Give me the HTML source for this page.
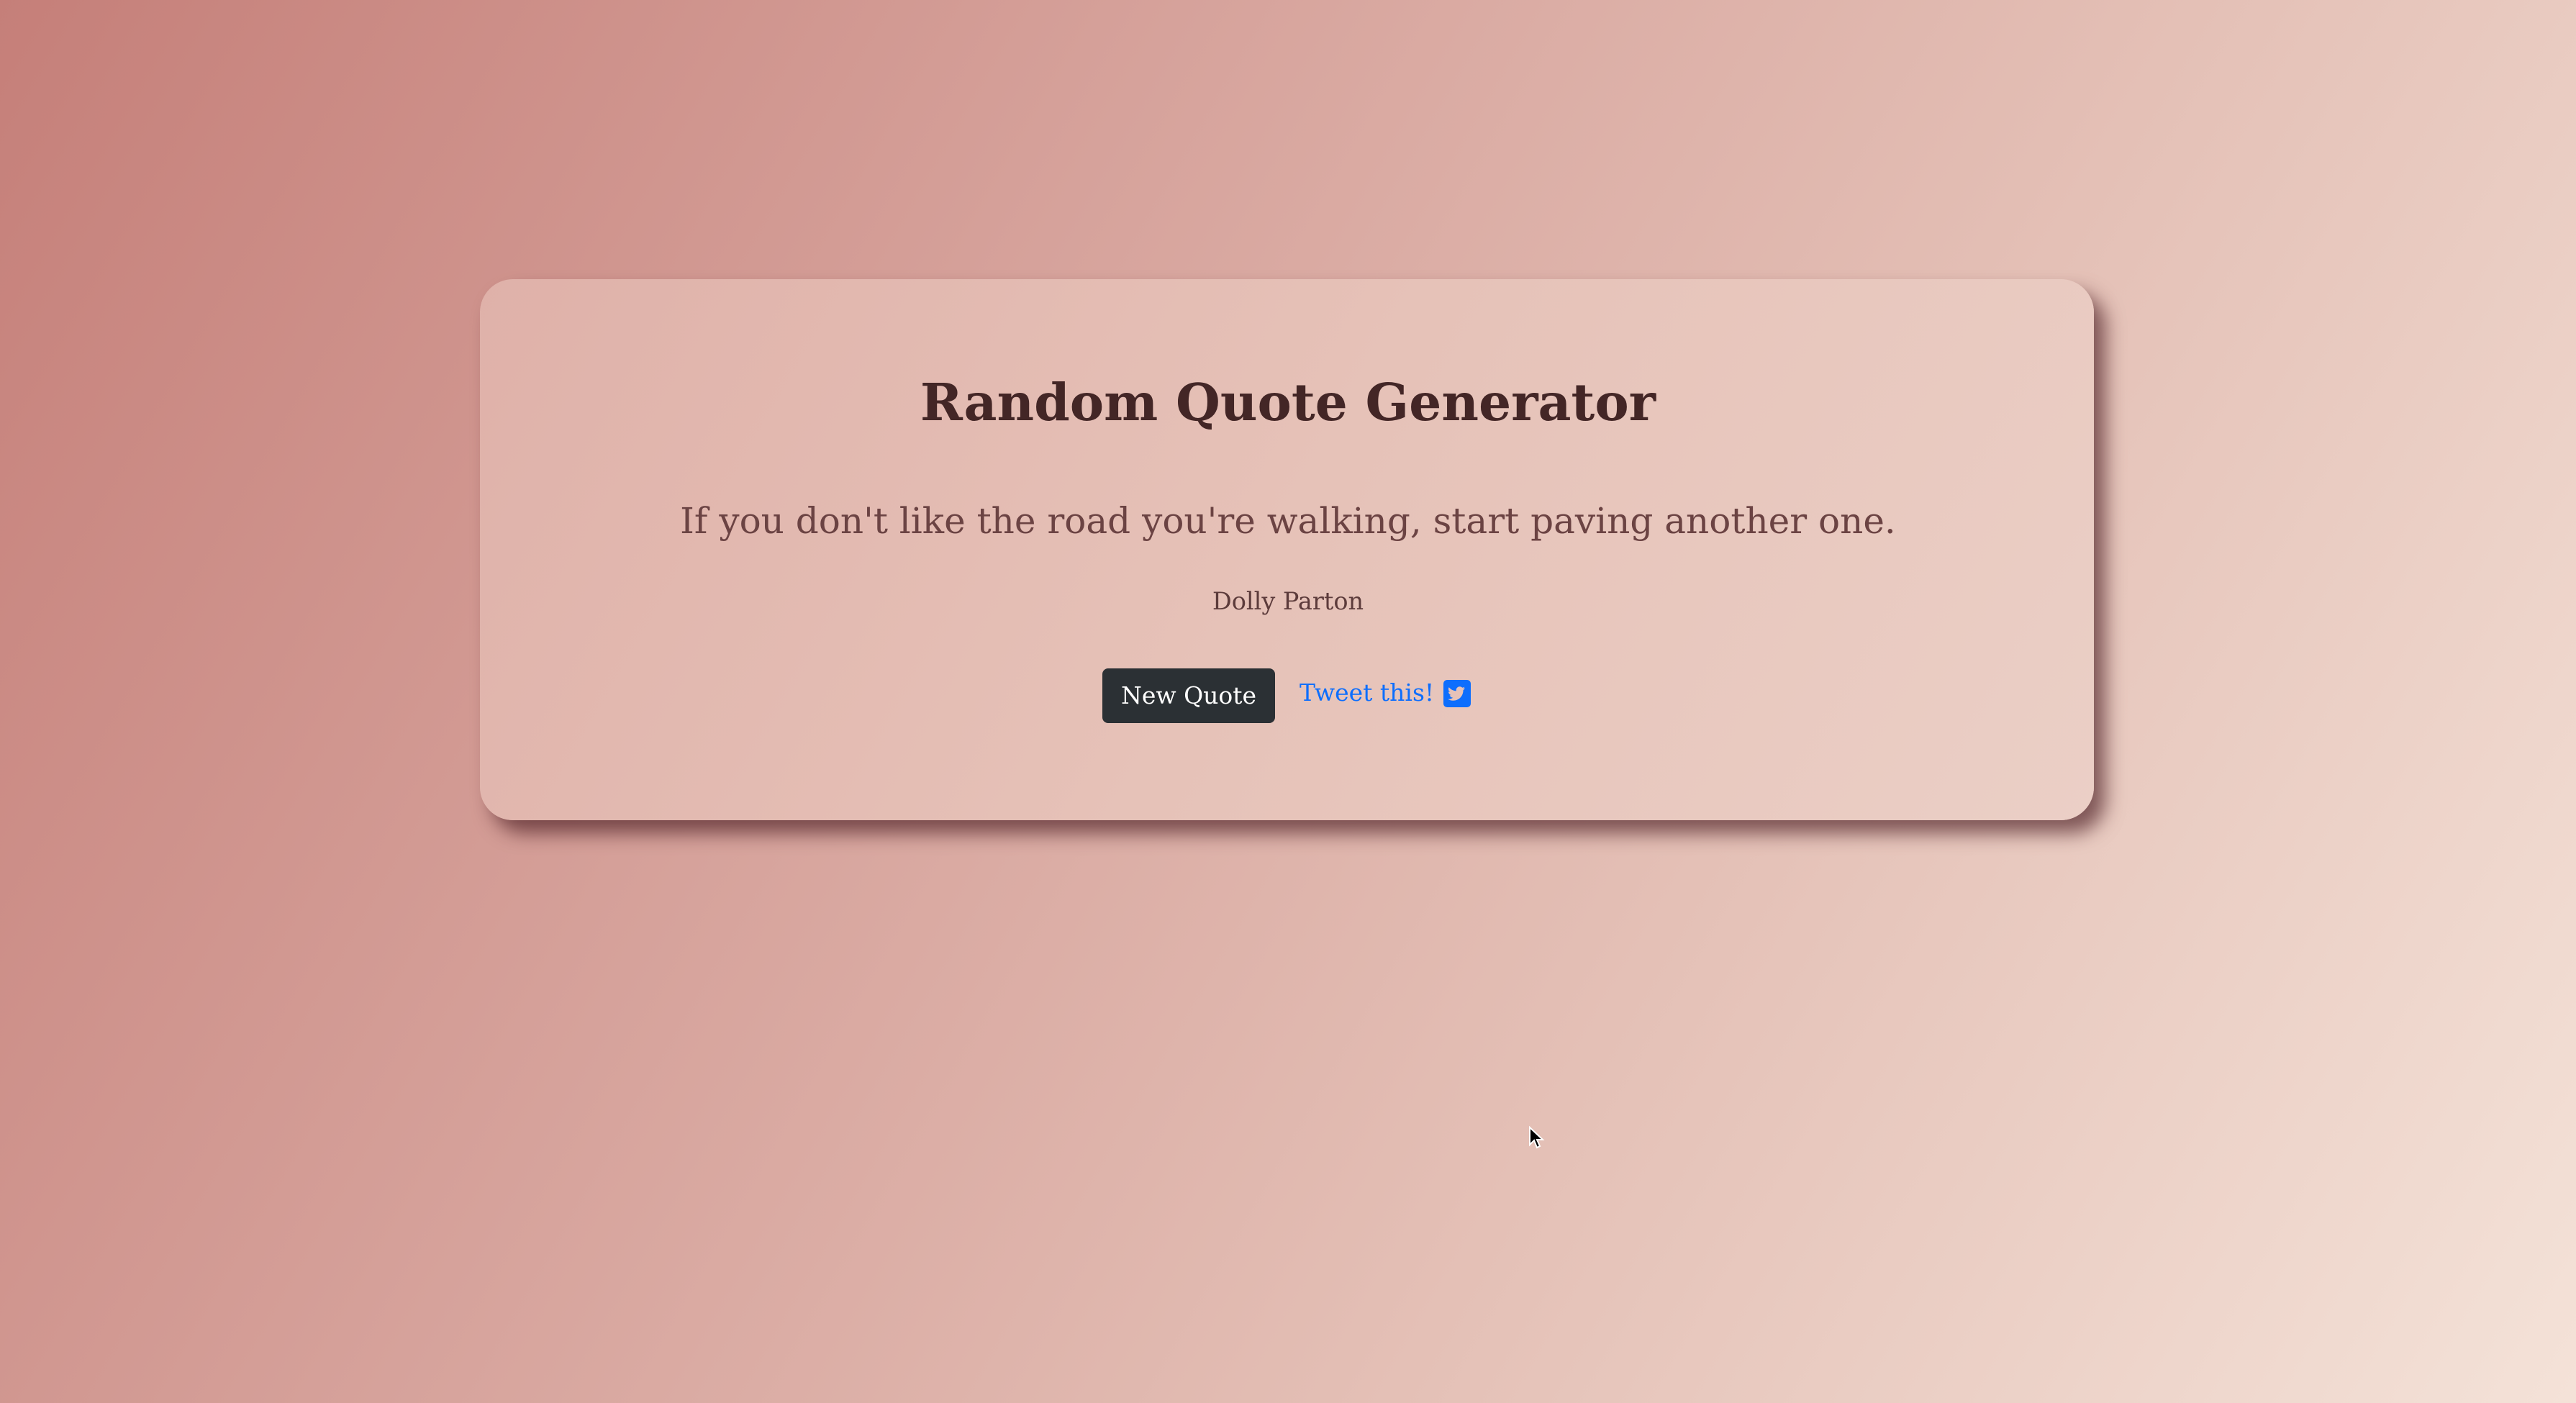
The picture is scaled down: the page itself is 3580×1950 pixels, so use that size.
<!DOCTYPE html>
<html><head><meta charset="utf-8">
<style>
html,body{margin:0;padding:0;width:3580px;height:1950px;overflow:hidden}
body{background:linear-gradient(120deg,#c57f79 0%,#d6a29b 35%,#e4c0b6 65%,#f4e2d8 100%);position:relative;font-family:"DejaVu Serif","Liberation Serif",serif}
.card{position:absolute;left:667px;top:388px;width:2243px;height:752px;border-radius:46px;background:linear-gradient(120deg,#dfb1a9 0%,#e6c2b8 50%,#ebcfc6 100%);box-shadow:16px 18px 26px rgba(70,25,30,.65)}
.t{position:absolute;left:0;width:3580px;text-align:center;white-space:nowrap}
.title{top:509px;line-height:100px;font-size:71px;font-weight:bold;color:#432626}
.quote{top:689px;line-height:70px;font-size:50px;color:#6b4343}
.author{top:816px;line-height:40px;font-size:33.5px;color:#5c3b3b}
.btn{position:absolute;left:1532px;top:929px;width:240px;height:76px;border-radius:8px;background:#2b3034;color:#fff;font-size:33px;line-height:76px;text-align:center;white-space:nowrap}
.tw{position:absolute;left:1806px;top:938px;line-height:50px;font-size:33px;color:#0d6efd;white-space:nowrap}
.ic{position:absolute;left:2006px;top:945px}
.cur{position:absolute;left:2124px;top:1565px}
</style></head><body>
<div class="card"></div>
<div class="t title">Random Quote Generator</div>
<div class="t quote">If you don't like the road you're walking, start paving another one.</div>
<div class="t author">Dolly Parton</div>
<div class="btn">New Quote</div>
<div class="tw">Tweet this!</div>
<svg class="ic" width="38" height="38" viewBox="0 0 38 38"><rect width="38" height="38" rx="5" fill="#0d6efd"/><path d="M30 11.5c-.9.4-1.8.6-2.8.8 1-.6 1.7-1.5 2.1-2.7-.9.6-2 1-3.1 1.2-.9-1-2.2-1.5-3.6-1.5-2.7 0-4.9 2.2-4.9 4.9 0 .4 0 .8.1 1.1-4.1-.2-7.700-2.2-10.1-5.1-.4.7-.7 1.6-.7 2.5 0 1.7.9 3.2 2.2 4.1-.8 0-1.6-.2-2.2-.6v.1c0 2.4 1.7 4.4 3.9 4.8-.4.1-.8.2-1.300.2-.3 0-.6 0-.9-.1.6 2 2.4 3.4 4.6 3.4-1.7 1.3-3.8 2.1-6.1 2.1-.4 0-.8 0-1.2-.1 2.2 1.4 4.8 2.2 7.5 2.2 9 0 14-7.5 14-14v-.6c1-.7 1.8-1.6 2.5-2.6z" fill="#e6c2b8"/></svg>
<svg class="cur" width="26" height="34" viewBox="0 0 26 34"><path d="M2 2 L2 26 L8 20 L12 30 L16 28 L12 19 L20 19 Z" fill="#000" stroke="#fff" stroke-width="2"/></svg>
</body></html>
